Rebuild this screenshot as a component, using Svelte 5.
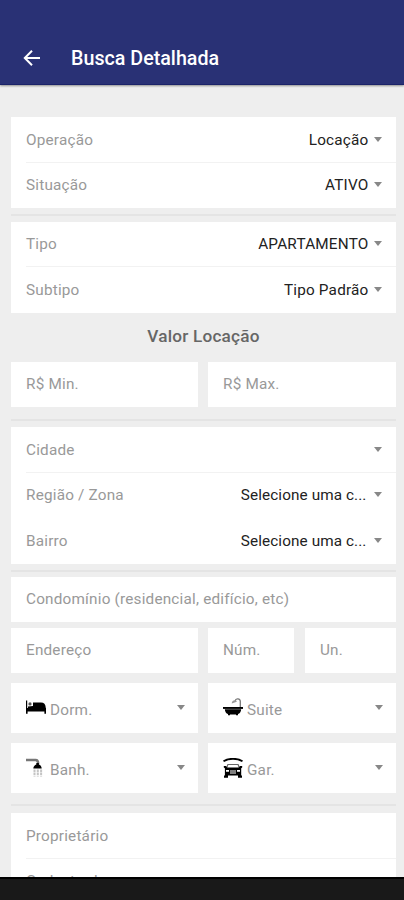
<script lang="ts">
	interface Field {
		label: string;
		value: string;
		noDivider?: boolean;
		truncated?: boolean;
	}

	let operacao: Field[] = [
		{ label: 'Operação', value: 'Locação' },
		{ label: 'Situação', value: 'ATIVO' }
	];

	let tipo: Field[] = [
		{ label: 'Tipo', value: 'APARTAMENTO' },
		{ label: 'Subtipo', value: 'Tipo Padrão' }
	];

	let local: Field[] = [
		{ label: 'Cidade', value: '' },
		{ label: 'Região / Zona', value: 'Selecione uma c...', noDivider: true, truncated: true },
		{ label: 'Bairro', value: 'Selecione uma c...', truncated: true }
	];

	let comodos = [
		{ icon: 'bed', label: 'Dorm.' },
		{ icon: 'bath', label: 'Suite' },
		{ icon: 'shower', label: 'Banh.' },
		{ icon: 'garage', label: 'Gar.' }
	];
</script>

{#snippet selectCard(fields: Field[])}
	<div class="card">
		{#each fields as field}
			<div class="row" class:no-divider={field.noDivider}>
				<span class="label">{field.label}</span>
				<span class="value" class:truncated={field.truncated}>{field.value}</span>
				<span class="caret"></span>
			</div>
		{/each}
	</div>
{/snippet}

<div class="screen">
	<header>
		<svg class="back" viewBox="0 0 18 18">
			<path d="M17 9H2.5M9 1.8L1.8 9L9 16.2" fill="none" stroke="#fff" stroke-width="2" />
		</svg>
		<h1>Busca Detalhada</h1>
	</header>

	<main>
		{@render selectCard(operacao)}
		<hr />
		{@render selectCard(tipo)}

		<h2>Valor Locação</h2>
		<div class="cols">
			<div class="input">R$ Min.</div>
			<div class="input">R$ Max.</div>
		</div>

		<hr class="after-inputs" />
		{@render selectCard(local)}
		<hr />

		<div class="input">Condomínio (residencial, edifício, etc)</div>
		<div class="cols address">
			<div class="input">Endereço</div>
			<div class="cols numbers">
				<div class="input">Núm.</div>
				<div class="input">Un.</div>
			</div>
		</div>

		<div class="cols rooms">
			{#each comodos as comodo}
				<div class="room">
					<svg class="icon" viewBox="0 0 20 20">
						{#if comodo.icon === 'bed'}
							<path d="M0 2.5h1.2v7.500H20v5.700h-1.600v-2.200H1.600v2.200H0z" />
							<circle cx="4" cy="5.900" r="1.600" fill="#555" />
							<path d="M2 10V8.500l5-.5V4.500h8c3 0 4.600 1.800 4.800 5.500z" />
						{:else if comodo.icon === 'bath'}
							<path d="M17.3 9V3.600c0-3.400-4.700-3.400-5.100-.7" fill="none" stroke="#777" stroke-width="1.300" />
							<path d="M8.700 5.500c.2-3.700 4.300-4.200 5.100-1.800z" fill="#999" />
							<path d="M0 9h20v1.900H0z" />
							<path d="M1.8 11.300h16.400c-.3 2.600-1.400 4.300-3.200 4.800v1.200h-2v-.9H7v.9H5v-1.200C3.200 15.600 2.100 13.900 1.800 11.300z" />
						{:else if comodo.icon === 'shower'}
							<path d="M0 2h9.600c1.800 0 2.600 1.200 2.600 3.700" fill="none" stroke="#777" stroke-width="2.400" />
							<path d="M10.300 5h2.600v1.600c1.700.6 2.600 2 2.800 4H7.300c.2-2 1.400-3.400 3-4z" />
							<path d="M8.500 11.500v7M11.800 11.500v7M15.100 11.500v7" stroke="#c4c4c4" stroke-width="2" stroke-dasharray="2.500 .6" />
						{:else}
							<path d="M.5 3.300C6 0 14 0 19.500 3.300" fill="none" stroke="#000" stroke-width="1.900" />
							<path d="M3.500 10.200l1.400-3.700h10.200l1.400 3.700" fill="none" stroke="#666" stroke-width="1.200" />
							<path fill-rule="evenodd" d="M.8 8h2.300l1 1.500h11.800l1-1.500h2.300v1.500l-1 .7v7.200h.8v2.300h-4v-2.300H5v2.300H1v-2.300h.9v-7.200L.8 9.500zM3 12.100v1.600h3v-1.600zm11 0v1.600h3v-1.600zM7 12.600v.8h6v-.8zm0 2v.8h6v-.8z" />
						{/if}
					</svg>
					<span class="label">{comodo.label}</span>
					<span class="caret"></span>
				</div>
			{/each}
		</div>

		<hr class="after-rooms" />
		<div class="card">
			<div class="row"><span class="label">Proprietário</span></div>
			<div class="row"><span class="label">Cadastrado</span></div>
		</div>
	</main>

	<div class="navbar"></div>
</div>

<style>
	:global(body) {
		margin: 0;
	}

	.screen {
		display: flex;
		flex-direction: column;
		height: 900px;
		overflow: hidden;
		background: #eee;
		color: #999;
		font-family: Roboto, sans-serif;
		font-size: 15.3px;
		letter-spacing: 0.2px;
	}

	header {
		flex: none;
		display: flex;
		align-items: center;
		box-sizing: border-box;
		height: 85px;
		padding: 32px 23px 0;
		background: #293175;
		border-bottom: 1px solid #1b2369;
		box-shadow: 0 1px 2px rgba(0, 0, 0, 0.4);
	}

	.back {
		width: 18px;
		height: 18px;
		margin-right: 30px;
	}

	h1 {
		margin: 0;
		color: #fff;
		font-size: 19.7px;
		font-weight: 500;
		letter-spacing: 0;
	}

	main {
		flex: 1;
		min-height: 0;
		overflow: hidden;
		padding: 32.4px 8px 0 11px;
	}

	.card,
	.input,
	.room {
		background: #fff;
	}

	.row {
		display: flex;
		align-items: center;
		box-sizing: border-box;
		height: 45.5px;
		margin-left: 15px;
		padding: 0.5px 14px 0 0;
		border-bottom: 1px solid #f2f2f2;
	}

	.row:last-child,
	.row.no-divider {
		border-bottom-color: transparent;
	}

	.value {
		margin-left: auto;
		margin-right: 5.5px;
		color: #222;
	}

	.value.truncated {
		margin-right: 7.5px;
		letter-spacing: 0.1px;
	}

	.caret {
		margin-bottom: 1px;
		border: 4.5px solid transparent;
		border-top: 5px solid #888;
		border-bottom: 0;
	}

	hr {
		height: 2px;
		margin: 6px 0 5.5px;
		border: 0;
		background: #e4e4e4;
	}

	h2 {
		margin: 0;
		height: 49.2px;
		color: #666;
		font-size: 17.2px;
		font-weight: 500;
		line-height: 46px;
		text-align: center;
	}

	.cols {
		display: grid;
		grid-template-columns: 187px 188px;
		column-gap: 10px;
	}

	.input {
		box-sizing: border-box;
		height: 45px;
		padding-left: 15px;
		line-height: 45px;
	}

	.after-inputs {
		margin: 12px 0 6px;
	}

	.address {
		margin-top: 6px;
	}

	.numbers {
		grid-template-columns: 86px 91px;
		column-gap: 11px;
	}

	.rooms {
		row-gap: 10px;
		margin-top: 10px;
	}

	.room {
		display: flex;
		align-items: center;
		box-sizing: border-box;
		height: 50px;
		padding: 0 13px 0 15px;
	}

	.icon {
		width: 20px;
		height: 20px;
		margin: 0 4px 1px 0;
	}

	.room .label {
		padding-top: 4px;
	}

	.room .caret {
		margin: 0 0.5px 1px auto;
	}

	.after-rooms {
		margin: 11px 0 7px;
	}

	.navbar {
		flex: none;
		box-sizing: border-box;
		height: 23px;
		background: #191919;
		border-top: 2px solid #000;
	}
</style>
